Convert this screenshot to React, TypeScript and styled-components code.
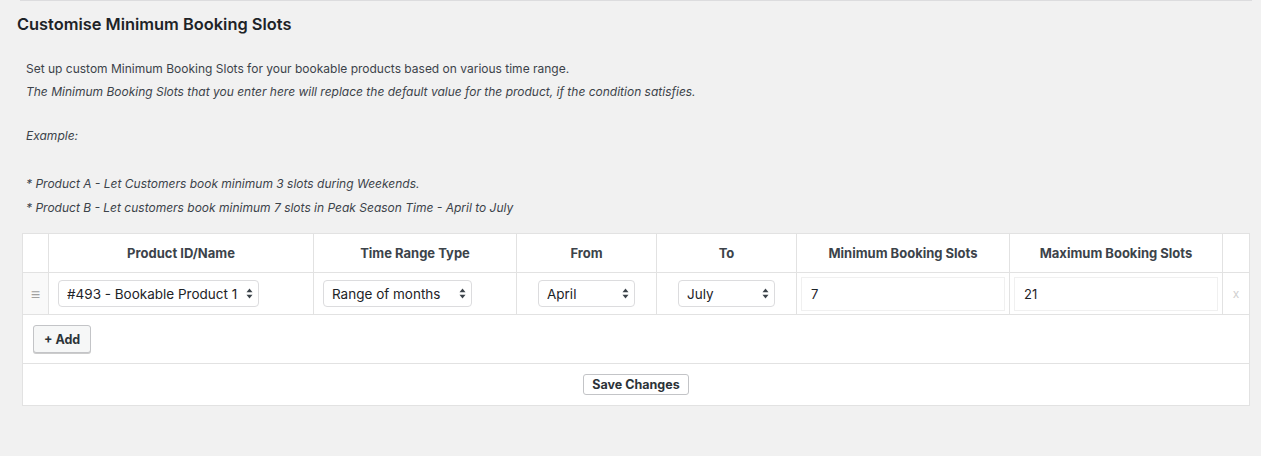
import styled, { createGlobalStyle } from "styled-components";

const GlobalStyle = createGlobalStyle`
  html, body {
    margin: 0;
    padding: 0;
    background: #f1f1f1;
  }
  body {
    font-family: Inter, "Liberation Sans", Arial, sans-serif;
    font-size: 13px;
    color: #444;
  }
`;

const Page = styled.div`
  width: 1261px;
  height: 456px;
  overflow: hidden;
  padding: 0 12px 0 17px;
  box-sizing: border-box;
`;

const TopRule = styled.div`
  height: 1px;
  background: #dcdcde;
  margin: 0 -3px 0 3px;
`;

const Heading = styled.h2`
  margin: 13px 0 0;
  font-size: 16.4px;
  font-weight: 600;
  line-height: 20px;
  color: #1d2327;
`;

const Intro = styled.div`
  margin: 23px 0 0 9px;
  color: #3c434a;
  font-size: 12px;
`;

const Line = styled.p<{ $italic?: boolean; $gap?: number }>`
  margin: ${(p) => p.$gap ?? 0}px 0 0;
  line-height: 23px;
  font-style: ${(p) => (p.$italic ? "italic" : "normal")};
`;

const Table = styled.table`
  margin: 14px 0 0 5px;
  width: 1227px;
  table-layout: fixed;
  border-collapse: collapse;
  background: #fff;
  border: 1px solid #dcdcde;
`;

const Col = styled.col<{ $w: number }>`
  width: ${(p) => p.$w}px;
`;

const Th = styled.th`
  height: 38px;
  padding: 0;
  border: 1px solid #e2e2e2;
  font-size: 13px;
  font-weight: 700;
  color: #3c434a;
  text-align: center;
  white-space: nowrap;
`;

const Td = styled.td<{ $align?: string; $shade?: boolean; $pad?: number }>`
  height: 41px;
  padding: 0 ${(p) => p.$pad ?? 9}px;
  border: 1px solid #e2e2e2;
  text-align: ${(p) => p.$align ?? "left"};
  background: ${(p) => (p.$shade ? "#f9f9f9" : "#fff")};
`;

const HandleCell = styled(Td)`
  padding: 0;
  text-align: center;
  color: #a0a0a0;
  font-size: 16px;
`;

const RemoveCell = styled(Td)`
  padding: 0;
  text-align: center;
  color: #cfcfcf;
  font-size: 12px;
`;

const FootCell = styled.td<{ $h: number; $align?: string }>`
  height: ${(p) => p.$h}px;
  padding: 0 10px;
  border: 1px solid #e2e2e2;
  text-align: ${(p) => p.$align ?? "left"};
`;

const SelectWrap = styled.div<{ $w: number }>`
  position: relative;
  display: inline-block;
  width: ${(p) => p.$w}px;
  vertical-align: middle;
`;

const Select = styled.select`
  appearance: none;
  -webkit-appearance: none;
  width: 100%;
  height: 27px;
  padding: 0 20px 0 8px;
  border: 1px solid #dcdcde;
  border-radius: 4px;
  background: #fff;
  font-family: Inter, "Liberation Sans", Arial, sans-serif;
  font-size: 13.5px;
  color: #1d2327;
`;

const Arrows = styled.svg`
  position: absolute;
  right: 6px;
  top: 8px;
  pointer-events: none;
`;

const NumberInput = styled.input`
  width: 100%;
  height: 34px;
  box-sizing: border-box;
  padding: 0 9px;
  border: 1px solid #f0f0f0;
  font-family: Inter, "Liberation Sans", Arial, sans-serif;
  font-size: 13px;
  color: #1d2327;
  background: #fff;
`;

const Button = styled.button<{ $primary?: boolean }>`
  font-family: Inter, "Liberation Sans", Arial, sans-serif;
  font-weight: 700;
  font-size: 12.5px;
  color: #2c3338;
  background: ${(p) => (p.$primary ? "#fff" : "#f6f7f7")};
  border: 1px solid #c3c4c7;
  border-radius: 3px;
  box-shadow: ${(p) => (p.$primary ? "none" : "0 1px 0 #ccc")};
  padding: ${(p) => (p.$primary ? "0 8px" : "0 10px")};
  height: ${(p) => (p.$primary ? "21px" : "28px")};
  cursor: pointer;
`;

function SelectBox({ w, value }: { w: number; value: string }) {
  return (
    <SelectWrap $w={w}>
      <Select defaultValue={value}>
        <option>{value}</option>
      </Select>
      <Arrows width="7" height="11" viewBox="0 0 7 11">
        <path d="M3.5 0.5 L6.5 4.3 H0.5 Z" fill="#3c434a" />
        <path d="M3.5 10.5 L6.5 6.7 H0.5 Z" fill="#3c434a" />
      </Arrows>
    </SelectWrap>
  );
}

const columns = [
  { label: "", w: 26 },
  { label: "Product ID/Name", w: 265 },
  { label: "Time Range Type", w: 203 },
  { label: "From", w: 140 },
  { label: "To", w: 140 },
  { label: "Minimum Booking Slots", w: 213 },
  { label: "Maximum Booking Slots", w: 213 },
  { label: "", w: 27 },
];

export default function App() {
  return (
    <>
      <GlobalStyle />
      <Page>
        <TopRule />
        <Heading>Customise Minimum Booking Slots</Heading>
        <Intro>
          <Line>Set up custom Minimum Booking Slots for your bookable products based on various time range.</Line>
          <Line $italic>
            The Minimum Booking Slots that you enter here will replace the default value for the product, if the condition satisfies.
          </Line>
          <Line $italic $gap={21}>Example:</Line>
          <Line $italic $gap={25}>* Product A - Let Customers book minimum 3 slots during Weekends.</Line>
          <Line $italic $gap={1}>* Product B - Let customers book minimum 7 slots in Peak Season Time - April to July</Line>
        </Intro>
        <Table>
          <colgroup>
            {columns.map((c, i) => (
              <Col key={i} $w={c.w} />
            ))}
          </colgroup>
          <thead>
            <tr>
              {columns.map((c, i) => (
                <Th key={i}>{c.label}</Th>
              ))}
            </tr>
          </thead>
          <tbody>
            <tr>
              <HandleCell $shade>≡</HandleCell>
              <Td>
                <SelectBox w={201} value="#493 - Bookable Product 1" />
              </Td>
              <Td>
                <SelectBox w={149} value="Range of months" />
              </Td>
              <Td $align="center">
                <SelectBox w={97} value="April" />
              </Td>
              <Td $align="center">
                <SelectBox w={97} value="July" />
              </Td>
              <Td $pad={4}>
                <NumberInput defaultValue="7" />
              </Td>
              <Td $pad={4}>
                <NumberInput defaultValue="21" />
              </Td>
              <RemoveCell>x</RemoveCell>
            </tr>
          </tbody>
          <tfoot>
            <tr>
              <FootCell colSpan={8} $h={48}>
                <Button>+ Add</Button>
              </FootCell>
            </tr>
            <tr>
              <FootCell colSpan={8} $h={41} $align="center">
                <Button $primary>Save Changes</Button>
              </FootCell>
            </tr>
          </tfoot>
        </Table>
      </Page>
    </>
  );
}
